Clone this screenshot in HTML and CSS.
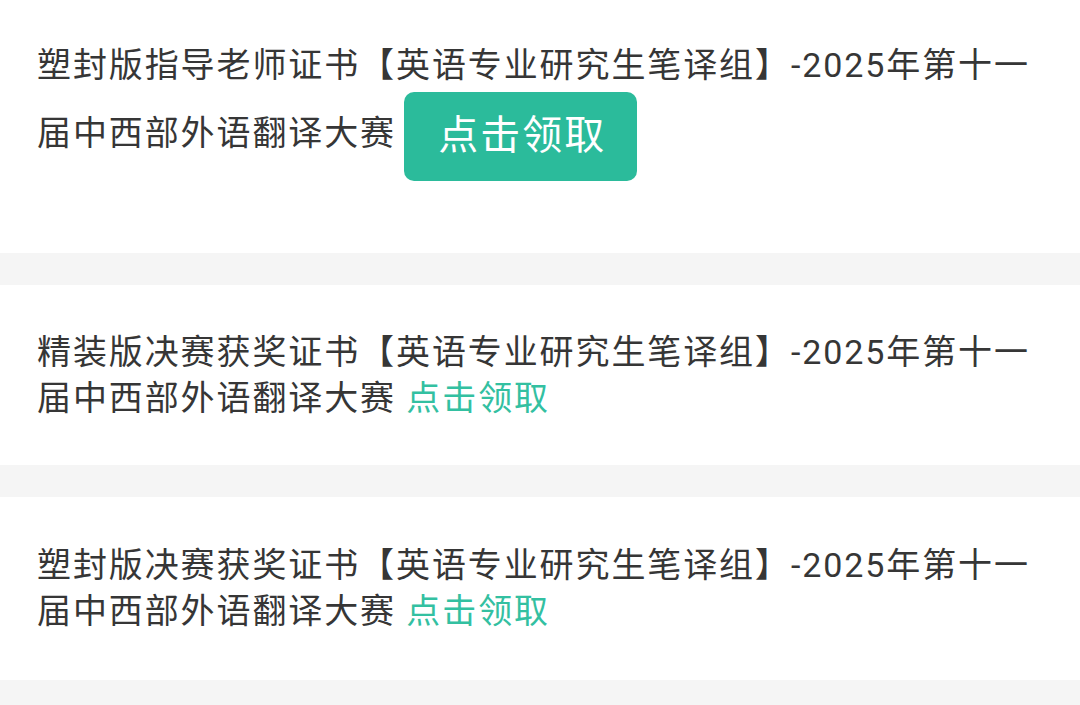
FILE: index.html
```html
<!DOCTYPE html>
<html lang="zh-CN">
<head>
    <meta charset="UTF-8">
    <meta name="viewport" content="width=device-width, initial-scale=1.0">
    <title>证书领取</title>
    <link rel="stylesheet" href="styles.css">
</head>
<body>
    <main class="cert-list">
        <section class="cert-card cert-card--first">
            <p class="cert-title">塑封版指导老师证书【英语专业研究生笔译组】-2025年第十一届中西部外语翻译大赛 <a class="claim-button" href="#">点击领取</a></p>
        </section>
        <section class="cert-card">
            <p class="cert-title">精装版决赛获奖证书【英语专业研究生笔译组】-2025年第十一届中西部外语翻译大赛 <a class="claim-link" href="#">点击领取</a></p>
        </section>
        <section class="cert-card cert-card--last">
            <p class="cert-title">塑封版决赛获奖证书【英语专业研究生笔译组】-2025年第十一届中西部外语翻译大赛 <a class="claim-link" href="#">点击领取</a></p>
        </section>
    </main>
</body>
</html>
```

FILE: styles.css
```css
body {
    margin: 0;
    padding: 0;
    background-color: #f5f5f5;
    font-family: Roboto, "Noto Sans CJK SC", sans-serif;
    color: #363636;
}

.cert-list {
    display: flex;
    flex-direction: column;
    gap: 32px;
}

.cert-card {
    background-color: #ffffff;
    padding: 44px 37px;
}

.cert-card--first {
    padding-top: 42px;
    padding-bottom: 68px;
}

.cert-card--last {
    padding-top: 45px;
    padding-bottom: 46px;
}

.cert-title {
    margin: 0;
    font-size: 34px;
    line-height: 46px;
    letter-spacing: 1.9px;
}

.claim-link {
    color: #33c0a1;
    text-decoration: none;
}

.claim-button {
    display: inline-block;
    vertical-align: middle;
    margin: 4px 0 4px -2px;
    padding: 16px 31px 17px 34px;
    font-size: 40px;
    line-height: 56px;
    letter-spacing: 2px;
    color: #ffffff;
    background-color: #2bbb9b;
    border-radius: 10px;
    text-decoration: none;
}
```
